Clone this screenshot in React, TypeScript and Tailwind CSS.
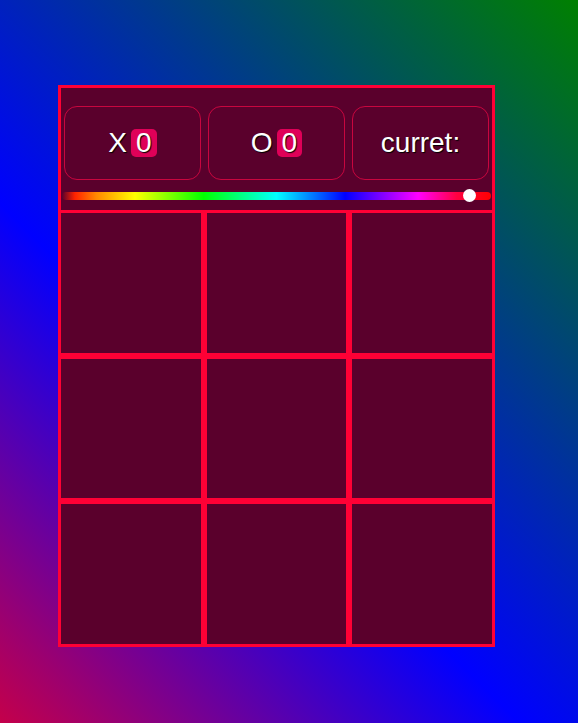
import React from "react";

const ScoreBox: React.FC<{ label: string; score?: number }> = ({ label, score }) => (
  <div className="flex-1 h-[74px] rounded-[13px] border border-[#c8063f] flex items-center justify-center">
    <span className="text-white text-[28px] leading-[28px] [text-shadow:1px_1px_1px_#000]">{label}</span>
    {score !== undefined && (
      <span className="ml-[4px] bg-[#df0058] rounded-[5px] px-[5px] h-[28px] flex items-center text-white text-[28px] leading-[28px] [text-shadow:1px_1px_1px_#000]">
        {score}
      </span>
    )}
  </div>
);

export default function App() {
  const cells = Array.from({ length: 9 });
  return (
    <div className="min-h-[723px] w-full bg-[linear-gradient(45deg,#c4004a_0%,#0000ff_40%,#008000_100%)] pt-[85px] pl-[58px] font-['Liberation_Sans',Arial,sans-serif]">
      <div className="w-[437px] border-[3px] border-[#ff0035] bg-[#5a002c]">
        <div className="pt-[18px] px-[3px] flex gap-[7px]">
          <ScoreBox label="X" score={0} />
          <ScoreBox label="O" score={0} />
          <ScoreBox label="curret:" />
        </div>
        <div className="relative mt-[12px] mb-[10px] h-[8px] mx-[1px] rounded-full bg-[linear-gradient(to_right,#5a002c_0%,#ff2200_3%,#ff8800_8%,#ffff00_17%,#00ff00_33%,#00ffff_50%,#0000ff_66%,#ff00ff_83%,#ff0040_92%,#ff0000_100%)]">
          <div className="absolute left-[401px] top-[-3px] w-[13px] h-[13px] rounded-full bg-white" />
        </div>
        <div className="grid grid-cols-3 gap-[6px] bg-[#ff0035] border-t-[3px] border-[#ff0035]">
          {cells.map((_, i) => (
            <div key={i} className="aspect-square bg-[#5a002c]" />
          ))}
        </div>
      </div>
    </div>
  );
}
